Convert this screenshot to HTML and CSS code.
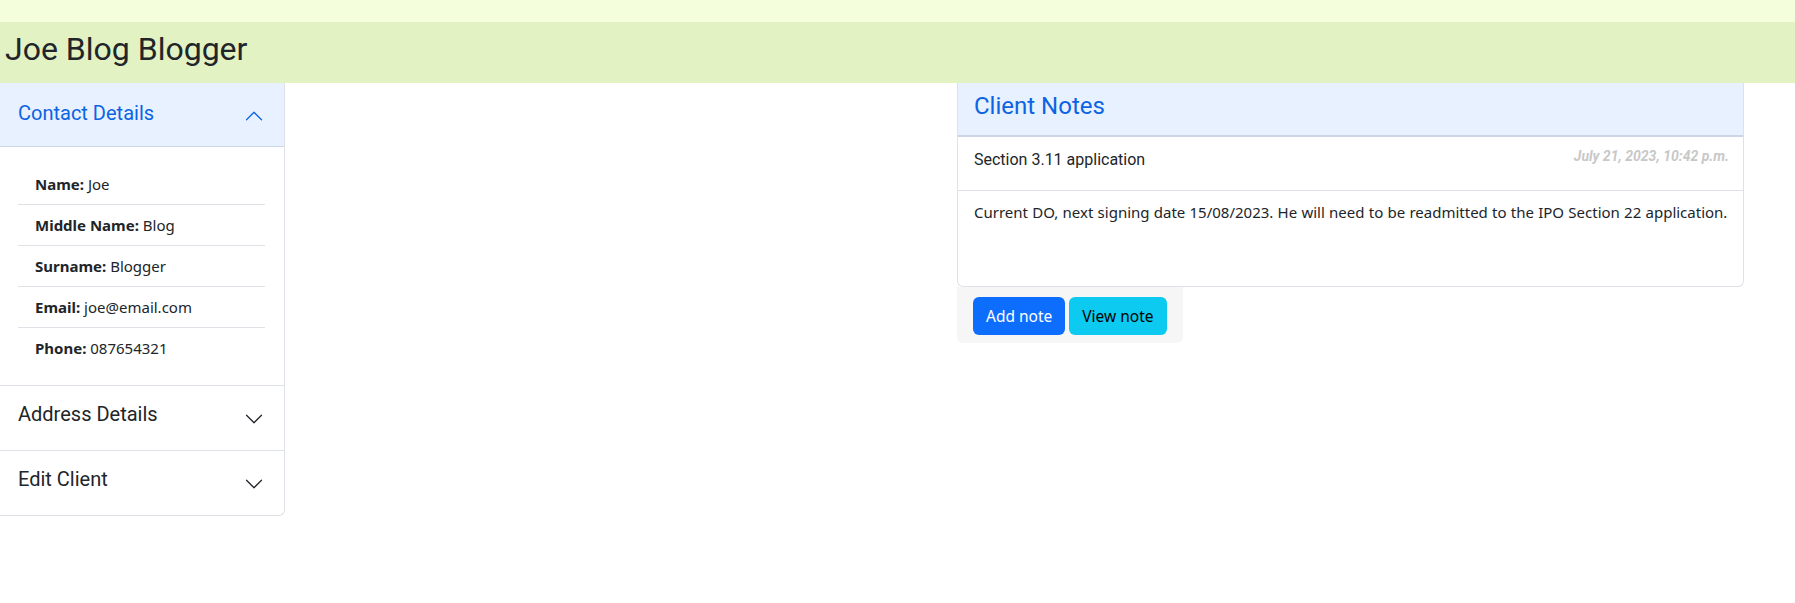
FILE: index.html
```html
<!DOCTYPE html>
<html>
<head>
<meta charset="utf-8">
<link rel="stylesheet" href="styles.css">
</head>
<body>
<div class="topstrip"></div>
<header class="band"><h1 class="client-name">Joe Blog Blogger</h1></header>
<main class="layout">
  <section class="accordion">
    <div class="acc-item">
      <div class="acc-header active">
        <span>Contact Details</span>
        <svg class="chev" viewBox="0 0 16 16" width="20" height="20"><path fill="currentColor" fill-rule="evenodd" d="M1.646 4.646a.5.5 0 0 1 .708 0L8 10.293l5.646-5.647a.5.5 0 0 1 .708.708l-6 6a.5.5 0 0 1-.708 0l-6-6a.5.5 0 0 1 0-.708z"/></svg>
      </div>
      <div class="acc-body">
        <ul class="details">
          <li><b>Name:</b> Joe</li>
          <li><b>Middle Name:</b> Blog</li>
          <li><b>Surname:</b> Blogger</li>
          <li><b>Email:</b> joe@email.com</li>
          <li><b>Phone:</b> 087654321</li>
        </ul>
      </div>
    </div>
    <div class="acc-item">
      <div class="acc-header">
        <span>Address Details</span>
        <svg class="chev" viewBox="0 0 16 16" width="20" height="20"><path fill="currentColor" fill-rule="evenodd" d="M1.646 4.646a.5.5 0 0 1 .708 0L8 10.293l5.646-5.647a.5.5 0 0 1 .708.708l-6 6a.5.5 0 0 1-.708 0l-6-6a.5.5 0 0 1 0-.708z"/></svg>
      </div>
    </div>
    <div class="acc-item">
      <div class="acc-header">
        <span>Edit Client</span>
        <svg class="chev" viewBox="0 0 16 16" width="20" height="20"><path fill="currentColor" fill-rule="evenodd" d="M1.646 4.646a.5.5 0 0 1 .708 0L8 10.293l5.646-5.647a.5.5 0 0 1 .708.708l-6 6a.5.5 0 0 1-.708 0l-6-6a.5.5 0 0 1 0-.708z"/></svg>
      </div>
    </div>
  </section>
  <section class="notes-col">
    <div class="notes-card">
      <div class="notes-header"><h3>Client Notes</h3></div>
      <div class="note-row">
        <h5 class="note-title">Section 3.11 application</h5>
        <span class="note-date">July 21, 2023, 10:42 p.m.</span>
      </div>
      <div class="note-body">Current DO, next signing date 15/08/2023. He will need to be readmitted to the IPO Section 22 application.</div>
    </div>
    <div class="note-actions">
      <button class="btn btn-primary">Add note</button>
      <button class="btn btn-info">View note</button>
    </div>
  </section>
</main>
</body>
</html>
```
FILE: styles.css
```css
* { box-sizing: border-box; }
html, body { margin: 0; padding: 0; background: #fff; }
body { font-family: "Noto Sans", "Open Sans", sans-serif; color: #212529; }

.topstrip { height: 22px; background: #f5fedc; }
.band { height: 61px; background: #e2f2c3; padding: 0 5px; }
.client-name {
  margin: 0;
  font-family: Roboto, sans-serif;
  font-weight: 400;
  font-size: 32px;
  line-height: 55px;
  color: #212529;
}

.layout {
  display: grid;
  grid-template-columns: 285px 1fr 787px;
  padding-right: 51px;
  align-items: start;
}

.accordion {
  grid-column: 1;
  border: 1px solid #dee2e6;
  border-top: 0;
  border-left: 0;
  border-radius: 0 0 6px 0;
  overflow: hidden;
}
.acc-item + .acc-item { border-top: 1px solid #dee2e6; }
.acc-header {
  display: flex;
  align-items: center;
  justify-content: space-between;
  height: 64px;
  padding: 0 20px 0 18px;
  font-family: Roboto, sans-serif;
  font-size: 20px;
  color: #212529;
}
.acc-header span { position: relative; top: -4px; }
.acc-header .chev { color: #212529; position: relative; top: 1px; }
.acc-header.active {
  background: #e7f1ff;
  color: #0c63e4;
  border-bottom: 1px solid #cdd6e4;
  height: 64px;
}
.acc-header.active span { top: -2px; }
.acc-header.active .chev { color: #0c63e4; transform: rotate(180deg); top: 1px; }

.acc-body { padding: 17px 19px 17px 18px; }
.details { list-style: none; margin: 0; padding: 0; }
.details li {
  padding: 8px 17px;
  font-size: 15px;
  line-height: 24px;
  border-bottom: 1px solid #dee2e6;
}
.details li:last-child { border-bottom: 0; }
.details b { font-weight: 700; }

.notes-col { grid-column: 3; }
.notes-card {
  border: 1px solid #dee2e6;
  border-top: 0;
  border-radius: 0 0 6px 6px;
  background: #fff;
}
.notes-header {
  background: #e7f1ff;
  border-bottom: 2px solid #cdd5e4;
  padding: 8px 16px;
  height: 54px;
}
.notes-header h3 {
  margin: 0;
  font-family: Roboto, sans-serif;
  font-weight: 400;
  font-size: 24px;
  line-height: 30px;
  color: #0c63e4;
}
.note-row {
  display: flex;
  justify-content: space-between;
  align-items: flex-start;
  padding: 11px 14px 0 16px;
  height: 54px;
  border-bottom: 1px solid #dee2e6;
}
.note-title {
  margin: 0;
  font-family: Roboto, sans-serif;
  font-weight: 400;
  font-size: 16px;
  line-height: 24px;
}
.note-date {
  font-family: Roboto, sans-serif;
  font-size: 14px;
  font-weight: 700;
  font-style: italic;
  color: #c8c8c8;
}
.note-body {
  padding: 10px 8px 10px 16px;
  height: 95px;
  font-size: 15px;
  word-spacing: 0.35px;
  line-height: 22px;
}
.note-actions {
  display: inline-flex;
  height: 56px;
  background: #f6f6f6;
  border-radius: 0 0 6px 6px;
  padding: 10px 16px 8px;
  gap: 4px;
}
.btn {
  flex-shrink: 0;
  white-space: nowrap;
  height: 38px;
  padding: 0 12px;
  border: 1px solid transparent;
  border-radius: 6px;
  font-family: "Noto Sans", sans-serif;
  font-size: 15.5px;
  line-height: 24px;
}
.btn-primary { background: #0d6efd; color: #fff; }
.btn-info { background: #0dcaf0; color: #000; }
```
